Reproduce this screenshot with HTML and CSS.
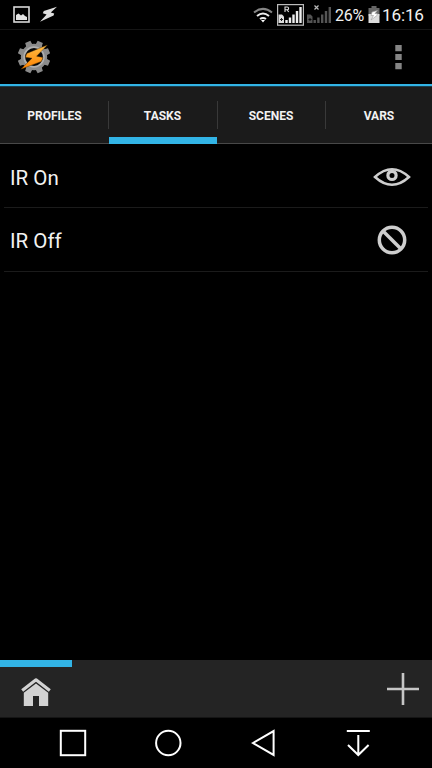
FILE: index.html
```html
<!DOCTYPE html>
<html lang="en">
<head>
<meta charset="utf-8">
<meta name="viewport" content="width=device-width">
<title>Tasks</title>
<link rel="stylesheet" href="styles.css">
</head>
<body>
<div class="phone">
  <div class="status">
    <svg class="picture" width="17" height="17" viewBox="0 0 17 17"><rect x="1" y="1" width="15" height="15" fill="none" stroke="#d9d9d9" stroke-width="1.6"/><path d="M3 14V9L5.5 7.5L8 9.5L10 8L12 10L14 11V14Z" fill="#e4e4e4"/></svg>
    <svg class="flash" width="18" height="17" viewBox="0 0 18 17"><path d="M17 .8L3.8 5L2.8 7.2L6.6 8.6L0 15.8L13.6 9.6L14.2 7.4L10.8 6.6Z" fill="#dedede"/></svg>
    <span class="spacer"></span>
    <svg class="wifi" width="20" height="16" viewBox="0 0 20 16"><g fill="none" stroke-width="2"><path d="M1 5.5Q10-1.8 19 5.5" stroke="#858585"/><path d="M4 9Q10 4 16 9" stroke="#eee"/><path d="M7 12Q10 9.8 13 12" stroke="#eee"/></g><path d="M8 13H12L10 15.5Z" fill="#fff"/></svg>
    <svg class="signal" width="27" height="22" viewBox="0 0 27 22"><rect x=".6" y=".6" width="25.8" height="20.6" fill="none" stroke="#bbb" stroke-width="1.2"/><path d="M1.5 10.5H5L7 12.5V19H1.5Z" fill="#ddd"/><path d="M3 15.5H6M4.5 14V17" stroke="#222"/><path d="M8.3 16H10.7V19H8.3ZM11.8 13.5H14.2V19H11.8ZM15.3 10.5H17.7V19H15.3ZM18.8 7H21.2V19H18.8ZM22.3 3H24.7V19H22.3Z" fill="#eee"/><path d="M8 8V3H10.2Q11.6 3 11.6 4.4Q11.6 5.7 10.2 5.7H8M9.9 5.7L11.7 8" fill="none" stroke="#ddd" stroke-width="1.1"/></svg>
    <svg class="signal-off" width="25" height="22" viewBox="0 0 25 22"><path d="M0 10.5H3.5L5.5 12.5V19H0ZM6.5 16H8.9V19H6.5ZM10.2 13.5H12.6V19H10.2ZM14 10.5H16.4V19H14ZM17.8 7H20.2V19H17.8ZM21.6 3H24V19H21.6Z" fill="#545454"/><path d="M1.5 15.5H4.5M3 14V17" stroke="#080808"/><path d="M7.5 1.5L11.5 5.5M11.5 1.5L7.5 5.5" stroke="#bbb" stroke-width="1.2"/></svg>
    <span class="percent">26%</span>
    <svg class="battery" width="12" height="18" viewBox="0 0 12 18"><path d="M3.5 0H8.5V2H11.5V10H.5V2H3.5Z" fill="#666"/><path d="M.5 8H11.5V17H.5Z" fill="#ddd"/><path d="M9.5 4.5L4 6L3 9.5H5.5L3 14L9 9.5L9.2 7.5H7Z" fill="#fff" stroke="#999" stroke-width=".6"/></svg>
    <span class="clock">16:16</span>
  </div>
  <header class="appbar">
    <svg width="36" height="36" viewBox="-18 -18 36 36">
      <defs><linearGradient id="bolt" x1="0" y1="0" x2="0" y2="1"><stop offset="0" stop-color="#ffbe48"/><stop offset="1" stop-color="#ff8200"/></linearGradient></defs>
      <g fill="#8b8b8b"><g id="teeth"><path id="tooth" d="M-2.8-16.3H2.8L3.5-10H-3.5ZM-2.8 16.3H2.8L3.5 10H-3.5Z" transform="rotate(22.5)"/><use href="#tooth" transform="rotate(45)"/></g><use href="#teeth" transform="rotate(90)"/></g>
      <circle r="11.3" fill="#080808" stroke="#8b8b8b" stroke-width="3.8"/>
      <circle r="9.8" fill="none" stroke="#b0b0b0" stroke-width="1.8"/>
      <path d="M13.4-12L-7.2-3.6L-8.6.2L-2 1.2L-13.2 12.2L7.4 4.4L9 .4L2.6-.8Z" fill="url(#bolt)" stroke="#432800" stroke-width=".4"/>
    </svg>
    <svg class="menu" width="7" height="26" viewBox="0 0 7 26"><path d="M.3 1H6.7V7.2H.3ZM.3 10H6.7V16H.3ZM.3 19H6.7V25.2H.3Z" fill="#858585"/></svg>
  </header>
  <nav class="tabs">
    <div class="tab"><span>PROFILES</span></div>
    <div class="tab active"><span>TASKS</span></div>
    <div class="tab"><span>SCENES</span></div>
    <div class="tab"><span>VARS</span></div>
  </nav>
  <main class="list">
    <div class="row"><span>IR On</span>
      <svg width="38" height="26" viewBox="-19 -13 38 26" fill="none" stroke="#cecece"><path d="M-17 0Q0-15.5 17 0Q0 15.5-17 0Z" stroke-width="2.5"/><circle cy="-1.6" r="4.1" stroke-width="3.2"/></svg>
    </div>
    <div class="row"><span>IR Off</span>
      <svg width="38" height="32" viewBox="-19 -16 38 32" fill="none" stroke="#cecece" stroke-width="3.5"><circle r="12.7"/><path d="M-8.8-8.8L8.8 8.8"/></svg>
    </div>
  </main>
  <footer class="projects">
    <div class="project">
      <svg width="32" height="30" viewBox="0 0 32 30"><path d="M2.2 12.4L16 1.8L29.8 12.4" fill="none" stroke="#d2d2d2" stroke-width="3.2" stroke-linejoin="round"/><path d="M3.8 14.8L16 5.6L28.2 14.8V28H19V18H13V28H3.8Z" fill="#d2d2d2"/></svg>
    </div>
    <svg class="add" width="34" height="34" viewBox="0 0 34 34"><path d="M1 17H33M17 1V33" stroke="#c6c6c6" stroke-width="2.6"/></svg>
  </footer>
  <nav class="system">
    <svg width="28" height="28" viewBox="-14 -14 28 28"><rect x="-12.2" y="-12.2" width="24.4" height="24.4"/></svg>
    <svg width="28" height="28" viewBox="-14 -14 28 28"><circle cx=".3" r="12.2"/></svg>
    <svg width="28" height="28" viewBox="-14 -14 28 28"><path d="M-10 0L10.6-11.9V11.9Z"/></svg>
    <svg width="28" height="28" viewBox="-14 -14 28 28"><path d="M-11.2-12H11.8M.3-8V12M-10 2L.3 12L10.6 2"/></svg>
  </nav>
</div>
</body>
</html>
```
FILE: styles.css
```css
* { box-sizing: border-box; }
body { margin: 0; background: #000; color: #f2f2f2; font-family: Roboto, sans-serif; }
svg { display: block; flex: none; }
.phone { width: 432px; height: 768px; display: flex; flex-direction: column; overflow: hidden; }
.status { height: 30px; flex: none; display: flex; align-items: center; padding: 0 8px 0 13px; border-bottom: 1px solid #151515; }
.flash { margin-left: 10px; }
.spacer { flex: 1; }
.wifi { margin-right: 4px; }
.signal-off { margin: 0 3px 0 3px; }
.percent { width: 29px; font-size: 16px; line-height: 20px; white-space: nowrap; letter-spacing: -.3px; padding-top: 2px; }
.battery { margin: 0 2px 0 4px; }
.clock { width: 42px; font-size: 17.2px; line-height: 20px; white-space: nowrap; letter-spacing: -.2px; }
.appbar { height: 57px; flex: none; display: flex; justify-content: space-between; align-items: center; padding: 0 30px 3px 16px; background: linear-gradient(#000 54px, #32b4e6 54px, #32b4e6 56px, #183e4c 56px); }
.tabs { height: 57px; flex: none; display: grid; grid-template-columns: repeat(4, 1fr); background: #1b1b1b; border-bottom: 1px solid #484848; }
.tab { display: flex; align-items: center; justify-content: center; position: relative; font-size: 12px; font-weight: 700; padding: 1px 0 0 1px; }
.tab + .tab::before { content: ""; position: absolute; left: 0; top: 14px; width: 1px; height: 28px; background: #393939; }
.tab:nth-child(n+3)::before { left: 1px; }
.tab:nth-child(n+3) { padding-left: 2px; }
.active::after { content: ""; position: absolute; left: 1px; right: -1px; bottom: -1px; height: 7px; background: #32b4e6; }
.list { flex: 1; padding: 0 4px; }
.row { height: 64px; display: flex; justify-content: space-between; align-items: center; padding: 3px 17px 0 6px; border-bottom: 1px solid #1b1b1b; font-size: 20.5px; }
.row + .row { padding-top: 1px; }
.row span { padding-top: 1px; }
.projects { height: 58px; flex: none; display: flex; justify-content: space-between; align-items: center; padding-right: 12px; background: #242424; border-bottom: 1px solid #151515; }
.project { width: 72px; height: 57px; border-top: 7px solid #32b4e6; display: flex; align-items: center; justify-content: center; padding-top: 1px; }
.system { height: 50px; flex: none; display: flex; justify-content: space-between; padding: 11px 60px 0 59px; fill: none; stroke: #fff; stroke-width: 2; }
```
